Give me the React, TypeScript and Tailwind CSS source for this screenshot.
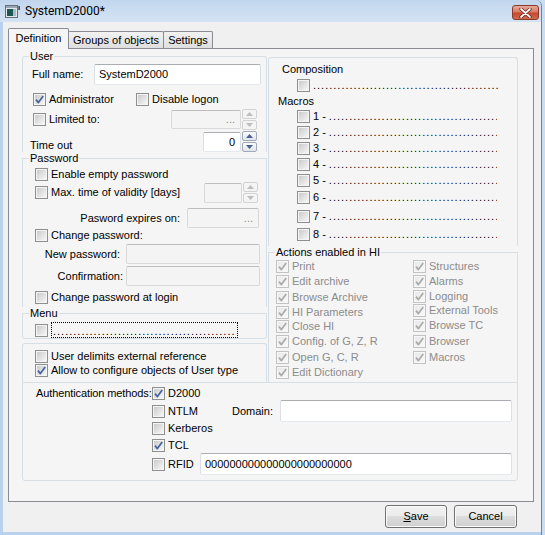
import React from 'react';

const DOTS = '.'.repeat(90);

function Check({ checked = false, disabled = false }: { checked?: boolean; disabled?: boolean }) {
  return (
    <span
      className={`relative block w-[13px] h-[13px] shrink-0 border p-[1px] ${
        disabled ? 'border-[#c2c2c2] bg-[#f7f7f7]' : 'border-[#8e8f8f] bg-[#f4f4f4]'
      }`}
    >
      <span
        className={`block w-full h-full bg-linear-to-br ${
          disabled ? 'from-[#e9e9e9] to-[#f8f8f8]' : 'from-[#cbcbcb] to-[#f6f6f6]'
        }`}
      />
      {checked && (
        <svg className="absolute -left-px -top-px" width="13" height="13" viewBox="0 0 13 13">
          <path
            d="M3 6.6 L5.4 9.6 L10.2 3"
            fill="none"
            stroke={disabled ? '#aaaaaa' : '#4564a0'}
            strokeWidth="1.7"
            strokeLinejoin="round"
          />
        </svg>
      )}
    </span>
  );
}

function CheckRow({
  label,
  checked,
  disabled,
  className = '',
}: {
  label: React.ReactNode;
  checked?: boolean;
  disabled?: boolean;
  className?: string;
}) {
  return (
    <div className={`flex items-center gap-[3px] whitespace-nowrap ${className}`}>
      <Check checked={checked} disabled={disabled} />
      <span className={disabled ? 'text-[#8c8c8c]' : ''}>{label}</span>
    </div>
  );
}

function Input({
  className,
  disabled = false,
  right = false,
  children,
}: {
  className: string;
  disabled?: boolean;
  right?: boolean;
  children?: React.ReactNode;
}) {
  return (
    <div
      className={`flex items-center shrink-0 border rounded-[2px] whitespace-nowrap overflow-hidden ${
        disabled
          ? 'bg-[#f4f4f4] border-[#d9d9d9] border-t-[#bdbdbd] text-[#8c8c8c]'
          : 'bg-white border-[#dbdfe6] border-t-[#abadb3] border-b-[#e3e9ef]'
      } ${right ? 'justify-end pr-[5px]' : 'pl-[4px]'} ${className}`}
    >
      {children}
    </div>
  );
}

function Arrow({ up, color }: { up?: boolean; color: string }) {
  return (
    <svg width="7" height="4" viewBox="0 0 7 4">
      <path d={up ? 'M0 4 L3.5 0 L7 4Z' : 'M0 0 L3.5 4 L7 0Z'} fill={color} />
    </svg>
  );
}

function Spin({ disabled = false }: { disabled?: boolean }) {
  const btn = disabled
    ? 'border-[#d3d3d3] bg-[#f4f4f4]'
    : 'border-[#a0aab6] bg-linear-to-b from-[#fafafa] to-[#e1e5ea]';
  const color = disabled ? '#bdbdbd' : '#4c5e92';
  return (
    <div className="flex flex-col gap-[1px] w-[15px] shrink-0">
      <div className={`h-[10px] border rounded-[2px] flex items-center justify-center ${btn}`}>
        <Arrow up color={color} />
      </div>
      <div className={`h-[10px] border rounded-[2px] flex items-center justify-center ${btn}`}>
        <Arrow color={color} />
      </div>
    </div>
  );
}

function Dots({ className }: { className: string }) {
  return <span className={`block overflow-hidden whitespace-nowrap tracking-[1px] ${className}`}>{DOTS}</span>;
}

function TitleBar() {
  return (
    <div className="h-[22px] shrink-0 flex bg-linear-to-b from-[#c1d6ed] to-[#d4e3f3]">
      <div className="flex items-center pl-[5px] pt-[1px]">
        <svg width="15" height="14" viewBox="0 0 15 14">
          <rect x="0.5" y="0.5" width="12" height="12" fill="#e4e7ea" stroke="#66707c" />
          <rect x="1" y="1" width="11" height="2" fill="#9aa6b3" />
          <rect x="2" y="4" width="6" height="7" fill="#1d5752" />
          <rect x="8" y="4" width="3" height="7" fill="#a7bccb" />
          <rect x="13.5" y="1" width="1.2" height="4" fill="#1a1a1a" />
        </svg>
        <span className="ml-[5px] font-['Roboto',sans-serif] text-[12px] text-black">SystemD2000*</span>
      </div>
      <div className="ml-auto mr-[2px] mt-[5px] w-[27px] h-[15px] rounded-[3px] border border-[#8a3a2d] bg-[linear-gradient(#e7ab9c,#d97a64_45%,#c6492f_55%,#cf6a4e)] flex items-center justify-center">
        <svg width="13" height="10" viewBox="0 0 13 10">
          <path d="M2 1 L11 9 M11 1 L2 9" stroke="#5b1d14" strokeWidth="3.2" strokeLinecap="round" />
          <path d="M2 1 L11 9 M11 1 L2 9" stroke="#ffffff" strokeWidth="1.7" strokeLinecap="round" />
        </svg>
      </div>
    </div>
  );
}

function Tabs() {
  return (
    <div className="h-[20px] flex items-end">
      <div className="relative z-10 w-[61px] h-[21px] -mb-px border border-b-0 border-[#898c95] rounded-t-[2px] bg-[#f5f5f5] flex justify-center pt-[3px]">
        Definition
      </div>
      <div className="-ml-px w-[96px] h-[17px] border border-b-0 border-[#898c95] rounded-t-[2px] bg-linear-to-b from-[#f2f2f2] to-[#dedede] flex justify-center pt-[2px]">
        Groups of objects
      </div>
      <div className="-ml-px w-[50px] h-[17px] border border-b-0 border-[#898c95] rounded-t-[2px] bg-linear-to-b from-[#f2f2f2] to-[#dedede] flex justify-center pt-[2px]">
        Settings
      </div>
    </div>
  );
}

function LeftColumn() {
  return (
    <div className="w-[245px] flex flex-col">
      <fieldset className="border border-b-0 border-[#d5dfe5] rounded-t-[3px]">
        <legend className="ml-[6px] px-[1px]">User</legend>
        <div className="flex items-center mt-[1px] h-[21px] pl-[9px]">
          <span className="w-[62px]">Full name:</span>
          <Input className="w-[167px] h-[21px]">SystemD2000</Input>
        </div>
        <div className="flex items-center mt-[5px] h-[18px] pl-[10px]">
          <CheckRow label="Administrator" checked className="w-[103px]" />
          <CheckRow label="Disable logon" />
        </div>
        <div className="flex items-center mt-[1px] h-[20px] pl-[10px]">
          <CheckRow label="Limited to:" className="w-[138px]" />
          <Input className="w-[70px] h-[19px]" disabled right>
            ...
          </Input>
          <div className="ml-[1px]">
            <Spin disabled />
          </div>
        </div>
        <div className="flex mt-[3px] h-[20px] pl-[7px]">
          <span className="w-[173px] pt-[7px]">Time out</span>
          <Input className="w-[38px] h-[20px]" right>
            0
          </Input>
          <div className="ml-[1px] -mt-[1px]">
            <Spin />
          </div>
        </div>
      </fieldset>

      <fieldset className="border border-b-0 border-[#d5dfe5] pb-[3px]">
        <legend className="ml-[6px] px-[1px]">Password</legend>
        <CheckRow label="Enable empty password" className="mt-[1px] h-[16px] pl-[12px]" />
        <div className="flex items-center h-[21px] pl-[12px]">
          <CheckRow label="Max. time of validity [days]" className="w-[169px]" />
          <Input className="w-[38px] h-[20px]" disabled />
          <div className="ml-[1px]">
            <Spin disabled />
          </div>
        </div>
        <div className="flex items-center mt-[5px] h-[20px]">
          <span className="w-[164px] text-right pr-[7px]">Pasword expires on:</span>
          <Input className="w-[72px] h-[20px]" disabled right>
            ...
          </Input>
        </div>
        <CheckRow label="Change password:" className="mt-[1px] h-[13px] pl-[12px]" />
        <div className="flex items-center mt-[2px] h-[20px]">
          <span className="w-[103px] text-right pr-[6px]">New password:</span>
          <Input className="w-[134px] h-[20px]" disabled />
        </div>
        <div className="flex items-center mt-[2px] h-[20px]">
          <span className="w-[103px] text-right pr-[3px]">Confirmation:</span>
          <Input className="w-[134px] h-[20px]" disabled />
        </div>
        <CheckRow label="Change password at login" className="mt-[4px] h-[14px] pl-[12px]" />
      </fieldset>

      <fieldset className="border border-[#d5dfe5] rounded-b-[3px]">
        <legend className="ml-[6px] px-[1px]">Menu</legend>
        <div className="flex items-center gap-[3px] mt-[2px] h-[16px] pl-[12px]">
          <Check />
          <div className="w-[187px] h-[16px] border border-dotted border-black flex items-end pl-[1px]">
            <Dots className="w-[183px] leading-[12px]" />
          </div>
        </div>
      </fieldset>

      <div className="mt-[4px] border border-b-0 border-[#d5dfe5] rounded-t-[3px] pt-[5px] pb-[5px]">
        <CheckRow label="User delimits external reference" className="h-[14px] pl-[12px]" />
        <CheckRow label="Allow to configure objects of User type" checked className="h-[14px] pl-[12px]" />
      </div>
    </div>
  );
}

function Macro({ n, className = '' }: { n: number; className?: string }) {
  return (
    <div className={`flex items-center gap-[3px] h-[16px] pl-[28px] ${className}`}>
      <Check />
      <span className="whitespace-nowrap">{n} -</span>
      <Dots className="w-[168px]" />
    </div>
  );
}

function RightColumn() {
  return (
    <div className="w-[250px] flex flex-col">
      <div className="mt-[7px] border border-b-0 border-[#d5dfe5] rounded-t-[3px] pt-[5px] pb-[4px]">
        <div className="h-[13px] pl-[13px]">Composition</div>
        <div className="flex items-center gap-[3px] mt-[3px] h-[13px] pl-[28px]">
          <Check />
          <Dots className="w-[186px]" />
        </div>
        <div className="mt-[3px] h-[13px] pl-[9px]">Macros</div>
        <Macro n={1} />
        <Macro n={2} />
        <Macro n={3} />
        <Macro n={4} />
        <Macro n={5} />
        <Macro n={6} className="mt-[1px]" />
        <Macro n={7} className="mt-[3px]" />
        <Macro n={8} className="mt-[2px]" />
      </div>
      <fieldset className="border border-b-0 border-[#d5dfe5] pb-[2px]">
        <legend className="ml-[6px] px-[1px]">Actions enabled in HI</legend>
        <div className="flex pl-[7px]">
          <div className="w-[137px] flex flex-col">
            <CheckRow label="Print" checked disabled className="h-[15px]" />
            <CheckRow label="Edit archive" checked disabled className="h-[15px]" />
            <CheckRow label="Browse Archive" checked disabled className="h-[16px]" />
            <CheckRow label="HI Parameters" checked disabled className="h-[14px]" />
            <CheckRow label="Close HI" checked disabled className="h-[15px]" />
            <CheckRow label="Config. of G, Z, R" checked disabled className="h-[15px]" />
            <CheckRow label="Open G, C, R" checked disabled className="h-[16px]" />
            <CheckRow label="Edit Dictionary" checked disabled className="h-[15px]" />
          </div>
          <div className="flex flex-col">
            <CheckRow label="Structures" checked disabled className="h-[15px]" />
            <CheckRow label="Alarms" checked disabled className="h-[15px]" />
            <CheckRow label="Logging" checked disabled className="h-[14px]" />
            <CheckRow label="External Tools" checked disabled className="h-[15px]" />
            <CheckRow label="Browse TC" checked disabled className="h-[15px]" />
            <CheckRow label="Browser" checked disabled className="h-[16px]" />
            <CheckRow label="Macros" checked disabled className="h-[16px]" />
          </div>
        </div>
      </fieldset>
    </div>
  );
}

function AuthBox() {
  return (
    <div className="w-[496px] border border-[#d5dfe5] rounded-b-[3px] pt-[4px] pb-[5px]">
      <div className="flex items-center h-[13px]">
        <span className="w-[129px] pl-[13px] whitespace-nowrap tracking-[-0.1px]">Authentication methods:</span>
        <CheckRow label="D2000" checked />
      </div>
      <div className="flex items-center h-[22px] pl-[129px]">
        <CheckRow label="NTLM" className="w-[80px]" />
        <span className="w-[48px]">Domain:</span>
        <Input className="w-[232px] h-[22px]" />
      </div>
      <div className="flex items-center h-[13px] pl-[129px]">
        <CheckRow label="Kerberos" />
      </div>
      <div className="flex items-center mt-[4px] h-[13px] pl-[129px]">
        <CheckRow label="TCL" checked />
      </div>
      <div className="flex items-center mt-[1px] h-[22px] pl-[129px]">
        <CheckRow label="RFID" className="w-[48px]" />
        <Input className="w-[312px] h-[22px]">000000000000000000000000</Input>
      </div>
    </div>
  );
}

function Button({ children, className }: { children: React.ReactNode; className: string }) {
  return (
    <div
      className={`h-[23px] rounded-[3px] border border-[#707070] shadow-[inset_0_0_0_1px_#fbfbfb] bg-[linear-gradient(#f2f2f2,#ebebeb_50%,#dddddd_50%,#cfcfcf)] flex items-center justify-center ${className}`}
    >
      {children}
    </div>
  );
}

export default function App() {
  return (
    <div className="w-[545px] h-[535px] bg-[#c9ddf2] font-['Liberation_Sans',Arial,sans-serif] text-[11px] leading-[13px] text-black select-none">
      <div className="w-[542px] h-full flex flex-col bg-[#b9d1ea] border-r border-[#6d83a0] rounded-tr-[6px] overflow-hidden">
        <TitleBar />
        <div className="flex-1 ml-[3px] mb-[3px] bg-[#f0f0f0] flex flex-col pl-[5px] pt-[6px]">
          <Tabs />
          <div className="w-[526px] h-[454px] border border-[#898c95] bg-[#f5f5f5] pl-[13px] pt-[1px]">
            <div className="flex gap-[1px]">
              <LeftColumn />
              <RightColumn />
            </div>
            <AuthBox />
          </div>
          <div className="w-[526px] flex justify-end gap-[7px] pr-[17px] mt-[3px]">
            <Button className="w-[62px]">
              <span>
                <span className="underline">S</span>ave
              </span>
            </Button>
            <Button className="w-[63px]">Cancel</Button>
          </div>
        </div>
      </div>
    </div>
  );
}
